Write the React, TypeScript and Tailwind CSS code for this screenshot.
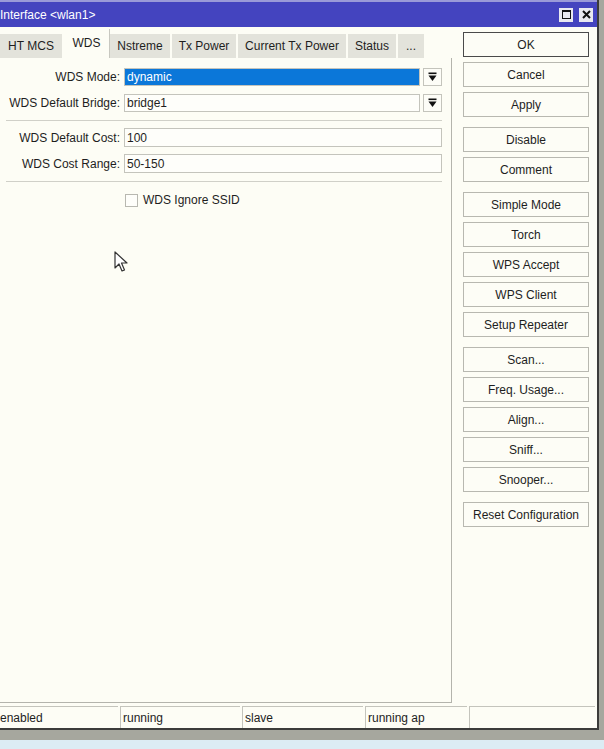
import React from "react";

function DropBtn() {
  return (
    <div className="w-[19px] h-[18px] border border-[#c4c4bc] bg-[#fdfdf7] flex items-center justify-center">
      <svg width="9" height="10" viewBox="0 0 9 10">
        <rect x="0.5" y="0.5" width="8" height="1.6" fill="#111" />
        <path d="M0.5 3.5 H8.5 L4.5 9 Z" fill="#111" />
      </svg>
    </div>
  );
}

function Btn({ label, primary }: { label: string; primary?: boolean }) {
  return (
    <div
      className={
        primary
          ? "h-[25px] flex items-center justify-center border-[1.5px] border-[#4a4a4a] bg-[#fdfdf6] text-[12px] text-[#1e1e1e]"
          : "h-[25px] flex items-center justify-center border border-[#b8b8b0] bg-[#fdfdf6] text-[12px] text-[#1e1e1e]"
      }
    >
      {label}
    </div>
  );
}

function Tab({ label, w, active }: { label: string; w: string; active?: boolean }) {
  return active ? (
    <div className={`${w} h-[29px] flex items-center justify-center bg-[#fdfdf5] border-r border-[#c8c8c0] text-[12px] text-[#1e1e1e] pb-[2px]`}>
      {label}
    </div>
  ) : (
    <div className={`${w} h-[24px] flex items-center justify-center bg-[#e3e3db] border-r-2 border-[#fdfdf5] text-[12px] text-[#1e1e1e]`}>
      {label}
    </div>
  );
}

function Row({ label, children }: { label: string; children: React.ReactNode }) {
  return (
    <div className="flex items-center h-[19px]">
      <div className="w-[124px] text-right text-[12px] text-[#1e1e1e] whitespace-nowrap pr-[4px]">{label}</div>
      {children}
    </div>
  );
}

export default function App() {
  return (
    <div className="w-[604px] h-[749px] bg-[#a6a79e] font-['Liberation_Sans',Arial,sans-serif] relative overflow-hidden">
      <div className="w-[599px] h-[730px] flex flex-col bg-[#fdfdf5] border-r-2 border-b-2 border-[#3c3c3a]">
        {/* title bar */}
        <div className="h-[27px] flex flex-col shrink-0">
          <div className="h-[2px] bg-[#9a9ad8]" />
          <div className="flex-1 bg-[#4444bf] flex items-center justify-between pr-[4px]">
            <span className="text-white text-[12px] leading-none">Interface &lt;wlan1&gt;</span>
            <div className="flex gap-[6px]">
              <div className="w-[14px] h-[14px] bg-[#e9e9f0] flex items-center justify-center">
                <div className="w-[9px] h-[9px] border border-[#111] border-t-2" />
              </div>
              <div className="w-[14px] h-[14px] bg-[#e9e9f0] flex items-center justify-center">
                <svg width="9" height="9" viewBox="0 0 9 9">
                  <path d="M1 1 L8 8 M8 1 L1 8" stroke="#111" strokeWidth="2" />
                </svg>
              </div>
            </div>
          </div>
        </div>

        {/* body */}
        <div className="flex flex-1 min-h-0">
          <div className="w-[452px] flex flex-col pt-[2px]">
            <div className="flex items-end h-[29px] shrink-0">
              <Tab label="HT MCS" w="w-[64px]" />
              <Tab label="WDS" w="w-[46px]" active />
              <Tab label="Nstreme" w="w-[62px]" />
              <Tab label="Tx Power" w="w-[66px]" />
              <Tab label="Current Tx Power" w="w-[110px]" />
              <Tab label="Status" w="w-[50px]" />
              <Tab label="..." w="w-[28px]" />
            </div>
            <div className="flex-1 border-r border-b border-[#b4b4ac] flex flex-col pt-[9px] pr-[9px]">
              <div className="flex flex-col gap-[7px]">
                <Row label="WDS Mode:">
                  <div className="flex-1 h-[18px] border border-[#c4c4bc] bg-[#0b77d9] flex items-center px-[2px]">
                    <span className="text-white text-[12px]">dynamic</span>
                  </div>
                  <div className="w-[3px]" />
                  <DropBtn />
                </Row>
                <Row label="WDS Default Bridge:">
                  <div className="flex-1 h-[18px] border border-[#c4c4bc] bg-[#fefefa] flex items-center px-[2px]">
                    <span className="text-[#1e1e1e] text-[12px]">bridge1</span>
                  </div>
                  <div className="w-[3px]" />
                  <DropBtn />
                </Row>
              </div>
              <div className="h-px bg-[#d0d0c8] ml-[6px] mt-[8px] mb-[7px]" />
              <div className="flex flex-col gap-[7px]">
                <Row label="WDS Default Cost:">
                  <div className="flex-1 h-[19px] border border-[#c4c4bc] bg-[#fefefa] flex items-center px-[2px]">
                    <span className="text-[#1e1e1e] text-[12px]">100</span>
                  </div>
                </Row>
                <Row label="WDS Cost Range:">
                  <div className="flex-1 h-[19px] border border-[#c4c4bc] bg-[#fefefa] flex items-center px-[2px]">
                    <span className="text-[#1e1e1e] text-[12px]">50-150</span>
                  </div>
                </Row>
              </div>
              <div className="h-px bg-[#d0d0c8] ml-[6px] mt-[8px] mb-[9px]" />
              <div className="flex items-center pl-[125px] gap-[5px]">
                <div className="w-[13px] h-[13px] border border-[#b8b8b0] bg-[#fefefa]" />
                <span className="text-[12px] text-[#1e1e1e]">WDS Ignore SSID</span>
              </div>
            </div>
          </div>

          <div className="w-[126px] ml-[11px] pt-[5px] flex flex-col gap-[10px]">
            <div className="flex flex-col gap-[5px]">
              <Btn label="OK" primary />
              <Btn label="Cancel" />
              <Btn label="Apply" />
            </div>
            <div className="flex flex-col gap-[5px]">
              <Btn label="Disable" />
              <Btn label="Comment" />
            </div>
            <div className="flex flex-col gap-[5px]">
              <Btn label="Simple Mode" />
              <Btn label="Torch" />
              <Btn label="WPS Accept" />
              <Btn label="WPS Client" />
              <Btn label="Setup Repeater" />
            </div>
            <div className="flex flex-col gap-[5px]">
              <Btn label="Scan..." />
              <Btn label="Freq. Usage..." />
              <Btn label="Align..." />
              <Btn label="Sniff..." />
              <Btn label="Snooper..." />
            </div>
            <div className="flex flex-col gap-[5px]">
              <Btn label="Reset Configuration" />
            </div>
          </div>
        </div>

        {/* status bar */}
        <div className="h-[25px] shrink-0 flex pt-[3px] gap-[2px] pr-[2px]">
          <div className="w-[118px] border-t border-[#c4c4bc] flex items-center text-[12px] text-[#1e1e1e]">enabled</div>
          <div className="w-[120px] border-t border-l border-[#c4c4bc] flex items-center pl-[2px] text-[12px] text-[#1e1e1e]">running</div>
          <div className="w-[121px] border-t border-l border-[#c4c4bc] flex items-center pl-[2px] text-[12px] text-[#1e1e1e]">slave</div>
          <div className="w-[102px] border-t border-l border-[#c4c4bc] flex items-center pl-[2px] text-[12px] text-[#1e1e1e]">running ap</div>
          <div className="flex-1 border-t border-l border-[#c4c4bc]" />
        </div>
      </div>
      <div className="absolute left-0 right-0 bottom-0 h-[9px] bg-[#dcecf4]" />

      {/* mouse cursor */}
      <svg className="absolute left-[114px] top-[251px]" width="16" height="22" viewBox="0 0 16 22">
        <path d="M1 1 L1 17 L5 13 L8 20 L10.5 19 L7.5 12 L13 12 Z" fill="#fff" stroke="#333" strokeWidth="1.2" strokeLinejoin="round" />
      </svg>
    </div>
  );
}
